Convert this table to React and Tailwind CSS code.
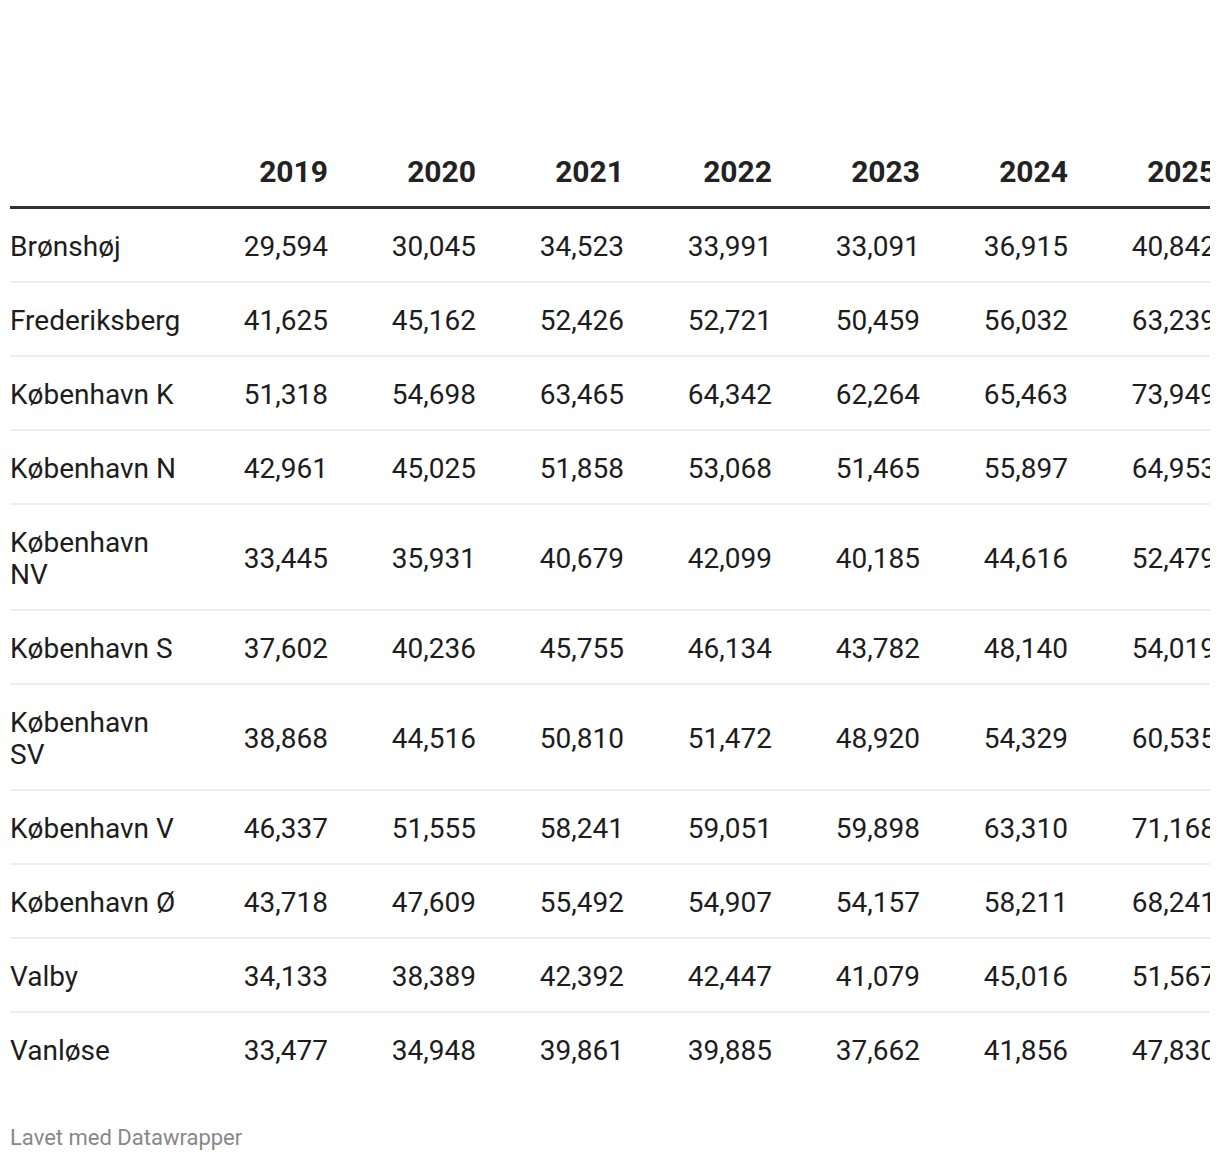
import React from "react";

const years = ["2019", "2020", "2021", "2022", "2023", "2024", "2025"];

const rows = [
    ["Brønshøj", "29,594", "30,045", "34,523", "33,991", "33,091", "36,915", "40,842"],
    ["Frederiksberg", "41,625", "45,162", "52,426", "52,721", "50,459", "56,032", "63,239"],
    ["København K", "51,318", "54,698", "63,465", "64,342", "62,264", "65,463", "73,949"],
    ["København N", "42,961", "45,025", "51,858", "53,068", "51,465", "55,897", "64,953"],
    ["København NV", "33,445", "35,931", "40,679", "42,099", "40,185", "44,616", "52,479"],
    ["København S", "37,602", "40,236", "45,755", "46,134", "43,782", "48,140", "54,019"],
    ["København SV", "38,868", "44,516", "50,810", "51,472", "48,920", "54,329", "60,535"],
    ["København V", "46,337", "51,555", "58,241", "59,051", "59,898", "63,310", "71,168"],
    ["København Ø", "43,718", "47,609", "55,492", "54,907", "54,157", "58,211", "68,241"],
    ["Valby", "34,133", "38,389", "42,392", "42,447", "41,079", "45,016", "51,567"],
    ["Vanløse", "33,477", "34,948", "39,861", "39,885", "37,662", "41,856", "47,830"],
];

export default function App() {
    return (
        <div
            className="bg-white min-h-[1162px] px-[10px] pt-[154px]"
            style={{ fontFamily: "Roboto, 'Liberation Sans', sans-serif" }}
        >
            <div className="w-[1200px] overflow-hidden">
                <table className="table-fixed border-collapse w-[1206px] text-[28px] leading-[32px] text-[#1d1d1d]">
                    <colgroup>
                        <col className="w-[176px]" />
                        <col className="w-[142px]" />
                        {years.slice(1).map((y) => (
                            <col key={y} className="w-[148px]" />
                        ))}
                    </colgroup>
                    <thead>
                        <tr className="border-b-[3px] border-[#333333]">
                            <th className="p-0 pb-[16px]"></th>
                            {years.map((y) => (
                                <th
                                    key={y}
                                    className="p-0 pb-[16px] text-right text-[30px] leading-[36px] font-bold text-[#222222]"
                                >
                                    {y}
                                </th>
                            ))}
                        </tr>
                    </thead>
                    <tbody>
                        {rows.map((r, i) => (
                            <tr
                                key={r[0]}
                                className={
                                    i < rows.length - 1
                                        ? "border-b-2 border-[#eeeeee]"
                                        : ""
                                }
                            >
                                <td className="pt-[22px] pb-[18px] px-0 text-left align-middle">
                                    {r[0]}
                                </td>
                                {r.slice(1).map((v, j) => (
                                    <td
                                        key={j}
                                        className="pt-[22px] pb-[18px] px-0 text-right align-middle whitespace-nowrap"
                                    >
                                        {v}
                                    </td>
                                ))}
                            </tr>
                        ))}
                    </tbody>
                </table>
            </div>
            <div className="mt-[41px] text-[22px] leading-[24px] text-[#888888]">
                Lavet med Datawrapper
            </div>
        </div>
    );
}
